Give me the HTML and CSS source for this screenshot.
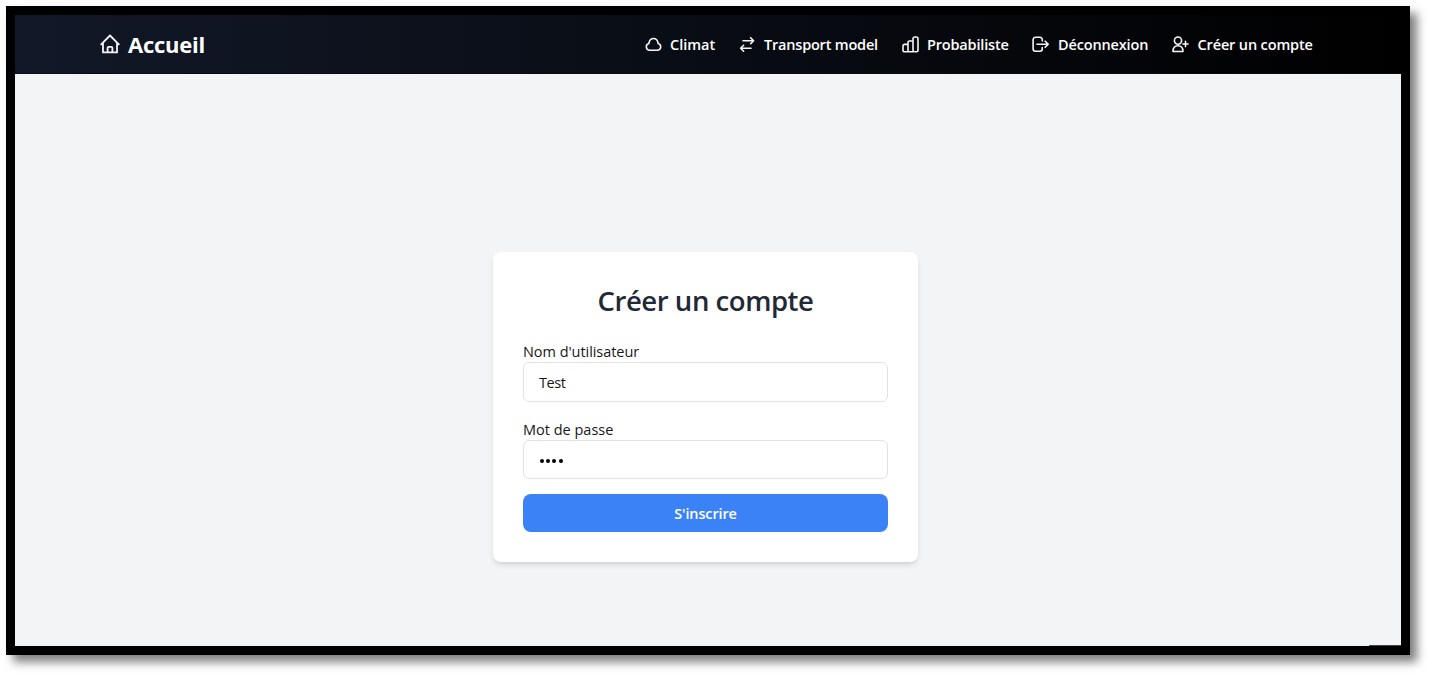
FILE: index.html
```html
<!DOCTYPE html>
<html lang="fr">
<head>
<meta charset="utf-8">
<title>Créer un compte</title>
<link rel="stylesheet" href="styles.css">
</head>
<body>
<div class="frame">
  <header class="header">
    <a class="brand">
      <svg class="brand-icon" viewBox="0 0 20 20"><path d="M1.200 10.300 10 1.500l8.800 8.800M3 9v9.400h14V9M7.600 18.200v-4.400a1 1 0 0 1 1-1h2.800a1 1 0 0 1 1 1v4.400"/></svg>
      <span class="brand-text">Accueil</span>
    </a>
    <nav class="nav">
      <a class="item"><svg class="icon" viewBox="0 0 17 17"><path d="M4.200 14.300A3.500 3.500 0 0 1 3.800 7.500C4.300 4.400 6 2.500 8.500 2.500s4.200 1.900 4.700 5a3.500 3.500 0 0 1-.4 6.800Z"/></svg><span class="label climat">Climat</span></a>
      <a class="item"><svg class="icon" viewBox="0 0 17 17"><path d="M4 4.700H14.500M11.600 1.700l3 3-3 3M12 12.300H1.700M4.600 9.300l-3 3 3 3"/></svg><span class="label transport">Transport model</span></a>
      <a class="item"><svg class="icon" viewBox="0 0 17 17"><path d="M6 15.800H2.500A1.500 1.500 0 0 1 1 14.300V9.900a1.500 1.500 0 0 1 1.500-1.500H6M11 15.800H7.500A1.500 1.500 0 0 1 6 14.300V6.500A1.500 1.500 0 0 1 7.500 5H11M11 2.700A1.700 1.700 0 0 1 12.700 1h1.600A1.700 1.700 0 0 1 16 2.700v11.400a1.700 1.700 0 0 1-1.700 1.700h-1.600a1.700 1.700 0 0 1-1.700-1.700Z"/></svg><span class="label proba">Probabiliste</span></a>
      <a class="item"><svg class="icon" viewBox="0 0 17 17"><path d="M10.300 5V3.800A2.500 2.500 0 0 0 7.800 1.300H3.600a2.500 2.500 0 0 0-2.500 2.500v8.900a2.500 2.500 0 0 0 2.500 2.500h4.200a2.500 2.500 0 0 0 2.500-2.500V11.500M5 8.250H16M13.200 5.200l3 3.050-3 3.050"/></svg><span class="label deco">Déconnexion</span></a>
      <a class="item"><svg class="icon" viewBox="0 0 17 17"><circle cx="6" cy="4.600" r="3.600"/><path d="M1 15.500c0-3.700 1.700-5.800 5-5.800s5 2.100 5 5.800ZM10.900 8h5.200M13.500 5.400v5.200"/></svg><span class="label compte">Créer un compte</span></a>
    </nav>
  </header>
  <main class="main">
    <form class="card">
      <h1 class="title">Créer un compte</h1>
      <label class="field-label user">Nom d'utilisateur</label>
      <div class="input"><span class="value">Test</span></div>
      <label class="field-label">Mot de passe</label>
      <div class="input password"><i class="dot"></i><i class="dot"></i><i class="dot"></i><i class="dot"></i></div>
      <button class="submit" type="button">S'inscrire</button>
    </form>
    <div class="status-edge"></div>
  </main>
</div>
</body>
</html>
```
FILE: styles.css
```css
* { box-sizing: border-box; }
body {
  margin: 0;
  padding: 6px;
  height: 674px;
  overflow: hidden;
  background: #fff;
  font-family: "Open Sans", "Noto Sans", sans-serif;
}
.frame {
  width: 1404px;
  height: 649px;
  border: 9px solid #000;
  box-shadow: 7px 7px 9px rgba(0, 0, 0, .5);
  display: flex;
  flex-direction: column;
}
.header {
  height: 59px;
  flex: none;
  display: flex;
  align-items: center;
  justify-content: space-between;
  padding: 1px 86px 0 85px;
  background: linear-gradient(90deg, #111827, #000);
  border-bottom: 1px solid #090b14;
  color: #fff;
}
.brand { display: flex; align-items: center; gap: 8px; padding-bottom: 2px; }
.brand-icon { width: 20px; height: 20px; }
.brand-text { font-size: 22px; font-weight: 700; line-height: 30px; letter-spacing: -.25px; }
svg { fill: none; stroke: #f5f5f5; stroke-width: 1.6; stroke-linecap: round; stroke-linejoin: round; flex: none; display: block; }
.brand-icon { stroke-width: 1.8; }
.nav { display: grid; grid-template-columns: 94px 163px 130px 140px 143px; }
.item { display: flex; align-items: center; gap: 8px; white-space: nowrap; }
.icon { width: 17px; height: 17px; }
.label { font-size: 14.5px; font-weight: 600; line-height: 20px; }
.transport { letter-spacing: -.2px; }
.proba { letter-spacing: -.18px; }
.deco { letter-spacing: -.15px; margin-left: 1px; }
.compte { letter-spacing: -.14px; margin-left: .5px; }
.main {
  flex: 1;
  min-height: 0;
  position: relative;
  display: flex;
  justify-content: center;
  align-items: flex-start;
  padding: 178px 5px 0 0;
  background: #f3f4f6;
}
.card {
  width: 425px;
  height: 310px;
  padding: 30px;
  border-radius: 8px;
  background: #fff;
  box-shadow: 0 4px 6px -1px rgba(0, 0, 0, .1), 0 2px 4px -2px rgba(0, 0, 0, .1);
  display: flex;
  flex-direction: column;
}
.title {
  margin: 0 0 21px;
  font-size: 27.5px;
  font-weight: 600;
  line-height: 38px;
  letter-spacing: -.45px;
  text-align: center;
  color: #1f2937;
}
.field-label { font-size: 14.5px; line-height: 21px; color: #171717; }
.user { letter-spacing: -.05px; }
.input {
  height: 40px;
  flex: none;
  border: 1px solid #dfe2e6;
  border-radius: 6px;
  padding: 0 15px;
  display: flex;
  align-items: center;
  margin-bottom: 17px;
  font-size: 14.5px;
  color: #171717;
}
.value { letter-spacing: -.4px; }
.password { height: 39px; margin: 0 0 15px; gap: 2.2px; padding-top: 2px; padding-left: 16px; }
.dot { width: 4px; height: 4px; border-radius: 50%; background: #000; }
.submit {
  height: 38px;
  flex: none;
  border: 0;
  border-radius: 8px;
  background: #3b82f6;
  color: #fff;
  font: 600 14.5px "Open Sans", sans-serif;
  letter-spacing: -.15px;
}
.status-edge {
  position: absolute;
  right: 0;
  bottom: 0;
  width: 32px;
  height: 1px;
  background: #444;
}
```
